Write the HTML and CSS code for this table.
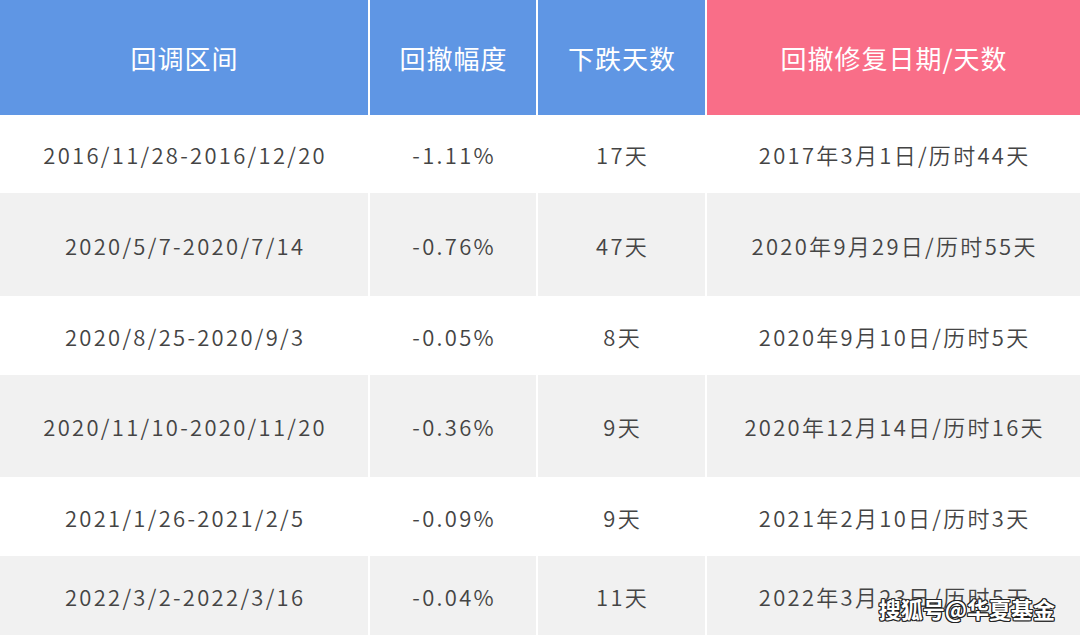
FILE: index.html
```html
<!DOCTYPE html>
<html lang="zh">
<head>
<meta charset="utf-8">
<link rel="stylesheet" href="styles.css">
</head>
<body>
<div class="table">
  <div class="cell head blue">回调区间</div>
  <div class="cell head blue">回撤幅度</div>
  <div class="cell head blue">下跌天数</div>
  <div class="cell head pink">回撤修复日期/天数</div>

  <div class="cell">2016/11/28-2016/12/20</div>
  <div class="cell">-1.11%</div>
  <div class="cell">17天</div>
  <div class="cell">2017年3月1日/历时44天</div>

  <div class="cell grey">2020/5/7-2020/7/14</div>
  <div class="cell grey">-0.76%</div>
  <div class="cell grey">47天</div>
  <div class="cell grey">2020年9月29日/历时55天</div>

  <div class="cell">2020/8/25-2020/9/3</div>
  <div class="cell">-0.05%</div>
  <div class="cell">8天</div>
  <div class="cell">2020年9月10日/历时5天</div>

  <div class="cell grey">2020/11/10-2020/11/20</div>
  <div class="cell grey">-0.36%</div>
  <div class="cell grey">9天</div>
  <div class="cell grey">2020年12月14日/历时16天</div>

  <div class="cell">2021/1/26-2021/2/5</div>
  <div class="cell">-0.09%</div>
  <div class="cell">9天</div>
  <div class="cell">2021年2月10日/历时3天</div>

  <div class="cell grey">2022/3/2-2022/3/16</div>
  <div class="cell grey">-0.04%</div>
  <div class="cell grey">11天</div>
  <div class="cell grey">2022年3月23日/历时5天</div>
</div>
<div class="watermark">搜狐号@华夏基金</div>
</body>
</html>
```
FILE: styles.css
```css
html, body {
  margin: 0;
  padding: 0;
  background: #ffffff;
}
body {
  width: 1080px;
  height: 635px;
  overflow: hidden;
  position: relative;
  font-family: "Noto Sans CJK SC", "Noto Sans", sans-serif;
}
.table {
  display: grid;
  grid-template-columns: 368px 166px 167px 1fr;
  grid-template-rows: 115px 78px 103px 79px 102px 79px 79px;
  column-gap: 2px;
  background: #ffffff;
}
.cell {
  display: flex;
  align-items: center;
  justify-content: center;
  font-size: 22px;
  font-weight: 350;
  color: #444444;
  letter-spacing: 2.3px;
  padding-left: 2.3px;
  background: #ffffff;
  white-space: nowrap;
}
.cell.grey {
  background: #f1f1f1;
}
.cell.head {
  color: #ffffff;
  font-size: 26px;
  font-weight: 400;
  letter-spacing: 1px;
  padding-left: 1px;
}
.cell.blue {
  background: #5f96e4;
}
.cell.pink {
  background: #f96e88;
}
.watermark {
  position: absolute;
  right: 25px;
  bottom: 11px;
  font-size: 22px;
  font-weight: bold;
  color: #ffffff;
  text-shadow: -1px -1px 0 #222, 1px -1px 0 #222, -1px 1px 0 #222, 1px 1px 0 #222, 0 1px 0 #222, 0 -1px 0 #222, 1px 0 0 #222, -1px 0 0 #222;
}
```
